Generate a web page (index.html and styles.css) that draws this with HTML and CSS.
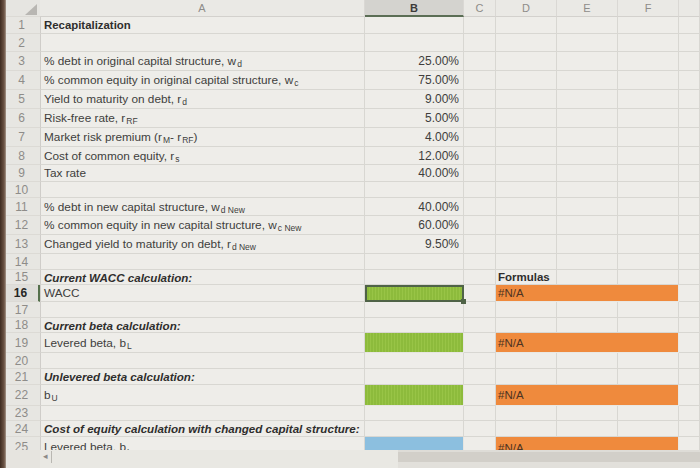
FILE: index.html
```html
<!DOCTYPE html>
<html>
<head>
<meta charset="utf-8">
<link rel="stylesheet" href="styles.css">
</head>
<body>
<div class="screen">
  <div class="bezel"></div>
  <div class="app">
    <div class="sheet">
      <div class="row hdr">
        <div class="rn corner"><span class="tri"></span></div>
        <div class="ch">A</div><div class="ch sel">B</div><div class="ch">C</div><div class="ch">D</div><div class="ch">E</div><div class="ch">F</div><div class="ch"></div>
      </div>
      <div class="row"><div class="rn">1</div><div class="c lab b">Recapitalization</div><div class="c"></div><div class="c"></div><div class="c"></div><div class="c"></div><div class="c"></div><div class="c"></div></div>
      <div class="row"><div class="rn">2</div><div class="c lab"></div><div class="c"></div><div class="c"></div><div class="c"></div><div class="c"></div><div class="c"></div><div class="c"></div></div>
      <div class="row"><div class="rn">3</div><div class="c lab">% debt in original capital structure, w<sub>d</sub></div><div class="c num">25.00%</div><div class="c"></div><div class="c"></div><div class="c"></div><div class="c"></div><div class="c"></div></div>
      <div class="row"><div class="rn">4</div><div class="c lab">% common equity in original capital structure, w<sub>c</sub></div><div class="c num">75.00%</div><div class="c"></div><div class="c"></div><div class="c"></div><div class="c"></div><div class="c"></div></div>
      <div class="row"><div class="rn">5</div><div class="c lab">Yield to maturity on debt, r<sub>d</sub></div><div class="c num">9.00%</div><div class="c"></div><div class="c"></div><div class="c"></div><div class="c"></div><div class="c"></div></div>
      <div class="row"><div class="rn">6</div><div class="c lab">Risk-free rate, r<sub>RF</sub></div><div class="c num">5.00%</div><div class="c"></div><div class="c"></div><div class="c"></div><div class="c"></div><div class="c"></div></div>
      <div class="row"><div class="rn">7</div><div class="c lab">Market risk premium (r<sub>M</sub> - r<sub>RF</sub>)</div><div class="c num">4.00%</div><div class="c"></div><div class="c"></div><div class="c"></div><div class="c"></div><div class="c"></div></div>
      <div class="row"><div class="rn">8</div><div class="c lab">Cost of common equity, r<sub>s</sub></div><div class="c num">12.00%</div><div class="c"></div><div class="c"></div><div class="c"></div><div class="c"></div><div class="c"></div></div>
      <div class="row"><div class="rn">9</div><div class="c lab">Tax rate</div><div class="c num">40.00%</div><div class="c"></div><div class="c"></div><div class="c"></div><div class="c"></div><div class="c"></div></div>
      <div class="row"><div class="rn">10</div><div class="c lab"></div><div class="c"></div><div class="c"></div><div class="c"></div><div class="c"></div><div class="c"></div><div class="c"></div></div>
      <div class="row"><div class="rn">11</div><div class="c lab">% debt in new capital structure, w<sub>d New</sub></div><div class="c num">40.00%</div><div class="c"></div><div class="c"></div><div class="c"></div><div class="c"></div><div class="c"></div></div>
      <div class="row"><div class="rn">12</div><div class="c lab">% common equity in new capital structure, w<sub>c New</sub></div><div class="c num">60.00%</div><div class="c"></div><div class="c"></div><div class="c"></div><div class="c"></div><div class="c"></div></div>
      <div class="row"><div class="rn">13</div><div class="c lab">Changed yield to maturity on debt, r<sub>d New</sub></div><div class="c num">9.50%</div><div class="c"></div><div class="c"></div><div class="c"></div><div class="c"></div><div class="c"></div></div>
      <div class="row"><div class="rn">14</div><div class="c lab"></div><div class="c"></div><div class="c"></div><div class="c"></div><div class="c"></div><div class="c"></div><div class="c"></div></div>
      <div class="row"><div class="rn">15</div><div class="c lab bi">Current WACC calculation:</div><div class="c"></div><div class="c"></div><div class="c b fx">Formulas</div><div class="c"></div><div class="c"></div><div class="c"></div></div>
      <div class="row"><div class="rn act">16</div><div class="c lab">WACC</div><div class="c green selcell"><span class="handle"></span></div><div class="c"></div><div class="c orange">#N/A</div><div class="c"></div></div>
      <div class="row"><div class="rn">17</div><div class="c lab"></div><div class="c"></div><div class="c"></div><div class="c"></div><div class="c"></div><div class="c"></div><div class="c"></div></div>
      <div class="row"><div class="rn">18</div><div class="c lab bi">Current beta calculation:</div><div class="c"></div><div class="c"></div><div class="c"></div><div class="c"></div><div class="c"></div><div class="c"></div></div>
      <div class="row"><div class="rn">19</div><div class="c lab">Levered beta, b<sub>L</sub></div><div class="c green"></div><div class="c"></div><div class="c orange">#N/A</div><div class="c"></div></div>
      <div class="row"><div class="rn">20</div><div class="c lab"></div><div class="c"></div><div class="c"></div><div class="c"></div><div class="c"></div><div class="c"></div><div class="c"></div></div>
      <div class="row"><div class="rn">21</div><div class="c lab bi">Unlevered beta calculation:</div><div class="c"></div><div class="c"></div><div class="c"></div><div class="c"></div><div class="c"></div><div class="c"></div></div>
      <div class="row"><div class="rn">22</div><div class="c lab">b<sub>U</sub></div><div class="c green"></div><div class="c"></div><div class="c orange">#N/A</div><div class="c"></div></div>
      <div class="row"><div class="rn">23</div><div class="c lab"></div><div class="c"></div><div class="c"></div><div class="c"></div><div class="c"></div><div class="c"></div><div class="c"></div></div>
      <div class="row"><div class="rn">24</div><div class="c lab bi over">Cost of equity calculation with changed capital structure:</div><div class="c"></div><div class="c"></div><div class="c"></div><div class="c"></div><div class="c"></div><div class="c"></div></div>
      <div class="row last"><div class="rn">25</div><div class="c lab">Levered beta, b<sub>L</sub></div><div class="c blue"></div><div class="c"></div><div class="c orange">#N/A</div><div class="c"></div></div>
    </div>
    <div class="bottom">
      <div class="bl"></div>
      <div class="tabs"><span class="arrow">&#9666;</span><span class="sep"></span></div>
      <div class="track"></div>
    </div>
  </div>
</div>
</body>
</html>
```
FILE: styles.css
```css
* { box-sizing: border-box; }
html, body { margin: 0; padding: 0; }
body {
  width: 700px; height: 468px; overflow: hidden;
  font-family: "Liberation Sans", Arial, sans-serif;
  font-size: 11.8px;
  color: #403e3c;
  background: #eeede9;
}
.screen { display: flex; width: 700px; height: 468px; }
.bezel {
  width: 6px; flex: none;
  background: linear-gradient(to right, #3e2b20, #6d5546 70%, #a99a8e);
}
.app { flex: 1; display: flex; flex-direction: column; min-width: 0; }
.sheet {
  height: 450px; overflow: hidden;
  display: grid;
  grid-template-columns: 34px 325px 99px 32px 61px 61px 61px 1fr;
  grid-template-rows: 17px 17px 18px 19px 19px 19px 19px 19px 18px 17px 16px 18px 19px 19px 16px 15px 17px 16px 15px 20px 16px 16px 21px 15px 16px 18px;
  background: #eeede9;
}
.row { display: contents; }
.rn {
  display: flex; align-items: center; justify-content: center;
  background: #e7e6e2;
  color: #8e8c89;
  font-size: 12px;
  border-bottom: 1px solid #dcdad5;
  padding-right: 3px;
}
.rn.act { color: #262524; font-weight: bold; border-right: 2px solid #55704c; background: #dfdeda; }
.corner { position: relative; background: #e6e5e1; }
.tri {
  position: absolute; right: 3px; bottom: 1px;
  width: 0; height: 0;
  border-left: 12px solid transparent;
  border-bottom: 11px solid #b8b6b2;
}
.ch {
  display: flex; align-items: center; justify-content: center;
  background: #eae9e5; color: #8e8c89;
  border-right: 1px solid #dad8d4;
  border-bottom: 1px solid #d3d1cd;
  font-size: 11px;
}
.ch.sel { background: #d4d3cf; color: #3c3b3a; font-weight: bold; border-bottom: 2px solid #5b6e55; }
.c {
  display: flex; align-items: center;
  border-right: 1px solid #d8d7d2;
  border-bottom: 1px solid #d8d7d2;
  white-space: nowrap;
  min-width: 0;
}
.lab { padding-left: 3px; border-left: 1px solid #cfcdc9; }
.over { overflow: visible; position: relative; z-index: 1; }
.num { justify-content: flex-end; padding-right: 4px; font-size: 12px; }
.b { font-weight: bold; color: #2f2e2d; font-size: 11.4px; }
.bi { font-weight: bold; font-style: italic; color: #2f2e2d; font-size: 11.6px; }
.fx { padding-left: 2px; font-size: 11.5px; }
sub {
  font-size: 8.5px;
  vertical-align: baseline;
  position: relative; top: 3px;
  margin-left: 1px;
}
.green {
  background: repeating-linear-gradient(to right, #8dbb3c 0 2px, #98c446 2px 3px);
  border-color: #e6e5e0;
}
.selcell { position: relative; border: 2px solid #4f6347; }
.handle {
  position: absolute; right: -4px; bottom: -4px;
  width: 5px; height: 5px; background: #4f6347;
}
.orange {
  grid-column: span 3;
  background: #ef8a3d;
  color: #4d3322;
  padding-left: 2px;
  font-size: 11.5px;
  border-color: #e9e8e3;
}
.last .c, .last .rn { align-items: flex-end; padding-bottom: 0; }
.blue { background: #8cbfdf; border-color: #e6e5e0; }
.bottom {
  height: 18px; display: flex;
  background: #e3e1dc;
}
.bl { width: 34px; background: #e6e4df; }
.tabs {
  width: 358px; display: flex; align-items: flex-start; gap: 3px;
  padding-left: 3px; padding-top: 1px;
  background: #e9e8e3;
  color: #8c8a87; font-size: 9px;
}
.sep { width: 1px; height: 12px; background: #b9b7b2; }
.track {
  flex: 1;
  border-top: 2px solid #dedcd7;
  background: linear-gradient(to bottom, #d2cfc9 0 10px, #e2e0db 10px);
}
```
